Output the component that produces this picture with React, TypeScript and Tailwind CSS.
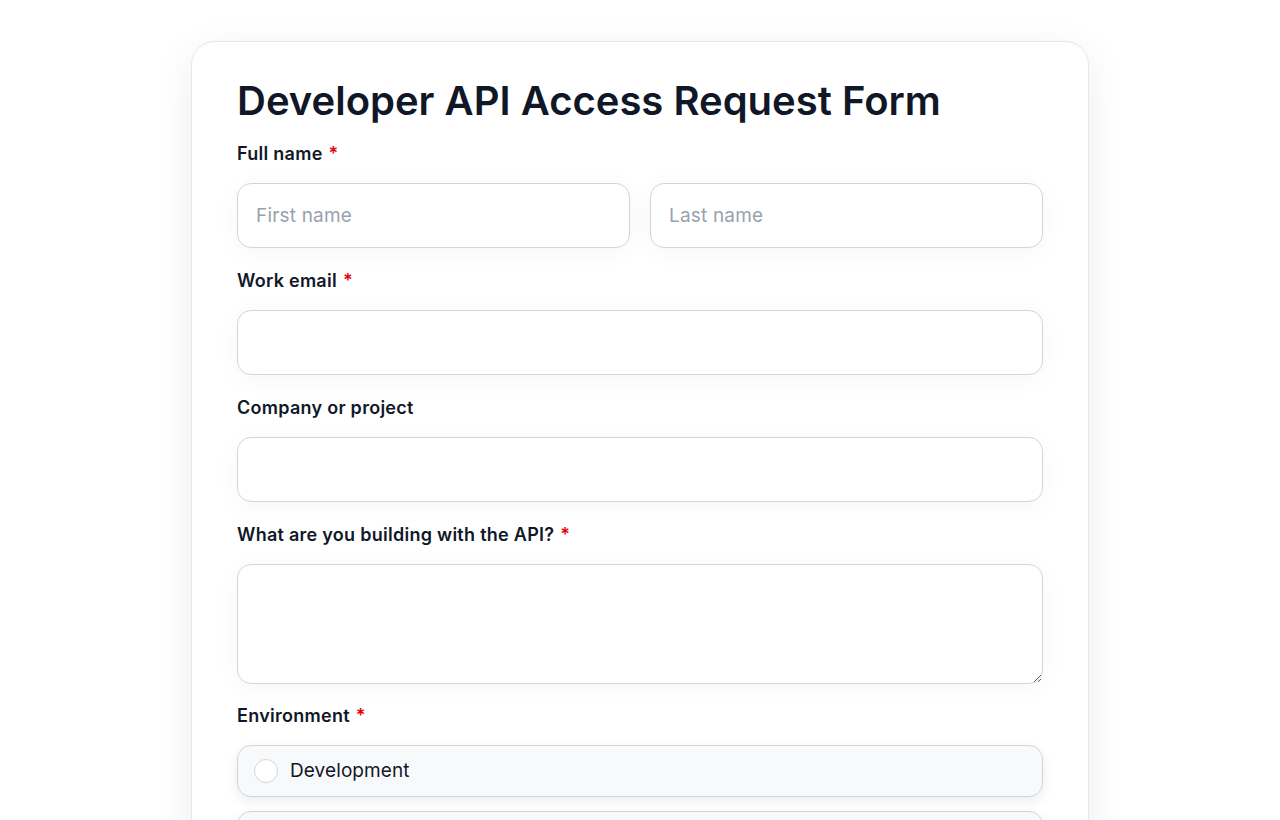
import React from "react";

const font = { fontFamily: "Inter, 'Liberation Sans', sans-serif" };

function Label({ text, required }: { text: string; required?: boolean }) {
  return (
    <label className="block h-6 text-[18px] leading-6 font-semibold tracking-[0.015em] text-gray-900 mb-[17px]">
      {text}
      {required && <span className="text-red-600 ml-1.5">*</span>}
    </label>
  );
}

const inputCls =
  "w-full h-[65px] rounded-[14px] border border-gray-300 bg-white px-[18px] text-[19px] tracking-[0.01em] text-gray-900 placeholder:text-gray-400 outline-none shadow-[0_4px_24px_rgba(15,23,42,0.04)]";

export default function App() {
  const [env, setEnv] = React.useState("");
  const envs = ["Development", "Staging", "Production"];

  return (
    <div className="min-h-screen bg-white pt-[41px] pb-10" style={font}>
      <div className="mx-auto w-[898px] rounded-[24px] border border-gray-200 bg-white px-[45px] pt-[35px] pb-10 shadow-[0_10px_40px_rgba(15,23,42,0.07)]">
        <h1 className="text-[40px] leading-[48px] font-semibold text-gray-900 mb-[17px]">
          Developer API Access Request Form
        </h1>

        <div className="mb-[21px]">
          <Label text="Full name" required />
          <div className="grid grid-cols-2 gap-5">
            <input className={inputCls} placeholder="First name" />
            <input className={inputCls} placeholder="Last name" />
          </div>
        </div>

        <div className="mb-[21px]">
          <Label text="Work email" required />
          <input className={inputCls} type="email" />
        </div>

        <div className="mb-[21px]">
          <Label text="Company or project" />
          <input className={inputCls} />
        </div>

        <div className="mb-[20px]">
          <Label text="What are you building with the API?" required />
          <textarea className="block w-full h-[120px] rounded-[14px] border border-gray-300 bg-white px-[18px] py-3 text-[19px] text-gray-900 outline-none shadow-[0_4px_24px_rgba(15,23,42,0.04)]" />
        </div>

        <div>
          <Label text="Environment" required />
          <div className="flex flex-col gap-[14px]">
            {envs.map((e) => (
              <label
                key={e}
                onClick={() => setEnv(e)}
                className="flex items-center gap-3 h-[52px] rounded-[14px] border border-gray-300 bg-[#f8f9fb] px-4 shadow-[0_4px_12px_rgba(15,23,42,0.08)] cursor-pointer"
              >
                <span className="flex items-center justify-center w-6 h-6 rounded-full border border-gray-300 bg-white">
                  {env === e && <span className="w-3 h-3 rounded-full bg-gray-900" />}
                </span>
                <span className="text-[19px] tracking-[0.005em] text-gray-900">{e}</span>
              </label>
            ))}
          </div>
        </div>
      </div>
    </div>
  );
}
